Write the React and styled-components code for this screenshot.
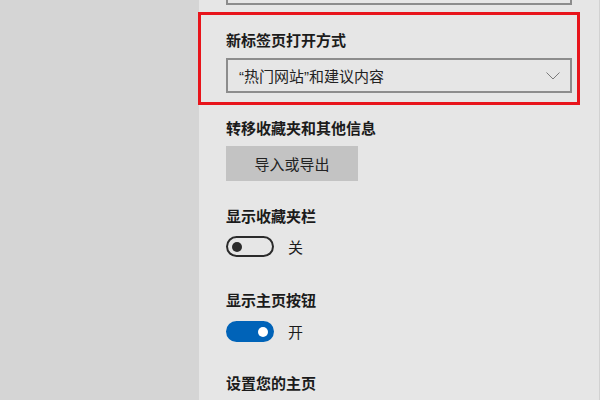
import styled, { createGlobalStyle } from "styled-components";

const Global = createGlobalStyle`
  html, body {
    margin: 0;
    padding: 0;
    background: #d5d5d5;
  }
  body {
    font-family: "Noto Sans CJK SC", "Noto Sans", sans-serif;
    color: #1b1b1b;
  }
`

const Screen = styled.div`
  display: flex;
  width: 600px;
  height: 400px;
  overflow: hidden;
`

const Backdrop = styled.div`
  width: 199px;
  flex-shrink: 0;
  background: #d5d5d5;
`

const Panel = styled.div`
  flex: 1;
  background: #e6e6e6;
  border-right: 1px solid #d2d2d2;
  padding-left: 27px;
  display: flex;
  flex-direction: column;
  align-items: flex-start;
`

const Highlight = styled.section`
  box-sizing: border-box;
  width: 382px;
  margin: 7px 0 0 -28px;
  padding: 15px 0 9px 25px;
  border: 3px solid #e8141b;
`

const Label = styled.div`
  font-size: 15px;
  line-height: 20px;
  font-weight: 700;
  margin-top: ${p => p.$top || 0}px;
  white-space: nowrap;
`

const Select = styled.div`
  box-sizing: border-box;
  width: 346px;
  height: 35px;
  margin-top: ${p => p.$top || 0}px;
  border: 2px solid #8c8c8c;
  display: flex;
  align-items: center;
  justify-content: space-between;
  padding: 0 10px 0 11px;
  font-family: "Liberation Sans", "Noto Sans CJK SC", sans-serif;
  font-size: 15px;
  color: #222;
`

const Button = styled.button`
  width: 132px;
  height: 35px;
  margin-top: 8px;
  border: none;
  background: #c3c3c3;
  font-family: inherit;
  font-size: 15px;
  color: #222;
  padding: 0;
`

const ToggleRow = styled.div`
  display: flex;
  align-items: center;
  gap: 14px;
  margin-top: ${p => p.$top}px;
  font-size: 15px;
`

const Track = styled.div`
  box-sizing: border-box;
  width: 48px;
  height: 21px;
  border-radius: 11px;
  border: 2px solid ${p => (p.$on ? "#0063b8" : "#2b2b2b")};
  background: ${p => (p.$on ? "#0063b8" : "transparent")};
  display: flex;
  align-items: center;
  justify-content: ${p => (p.$on ? "flex-end" : "flex-start")};
  padding: 0 4px;
`

const Thumb = styled.div`
  width: 10px;
  height: 10px;
  border-radius: 50%;
  background: ${p => (p.$on ? "#fff" : "#2b2b2b")};
`

function Chevron() {
  return (
    <svg width="14" height="8" viewBox="0 0 14 8">
      <path d="M0.5 0.5 L7 7 L13.5 0.5" fill="none" stroke="#7a7a7a" strokeWidth="1" />
    </svg>
  )
}

function Toggle({ on, top }) {
  return (
    <ToggleRow $top={top}>
      <Track $on={on}><Thumb $on={on} /></Track>
      <span>{on ? "开" : "关"}</span>
    </ToggleRow>
  )
}

export default function App() {
  return (
    <Screen>
      <Global />
      <Backdrop />
      <Panel>
        <Select $top={-30} />
        <Highlight>
          <Label>新标签页打开方式</Label>
          <Select $top={8}>
            <span>“热门网站”和建议内容</span>
            <Chevron />
          </Select>
        </Highlight>
        <Label $top={13}>转移收藏夹和其他信息</Label>
        <Button>导入或导出</Button>
        <Label $top={25}>显示收藏夹栏</Label>
        <Toggle on={false} top={10} />
        <Label $top={33}>显示主页按钮</Label>
        <Toggle on={true} top={11} />
        <Label $top={31}>设置您的主页</Label>
      </Panel>
    </Screen>
  )
}
